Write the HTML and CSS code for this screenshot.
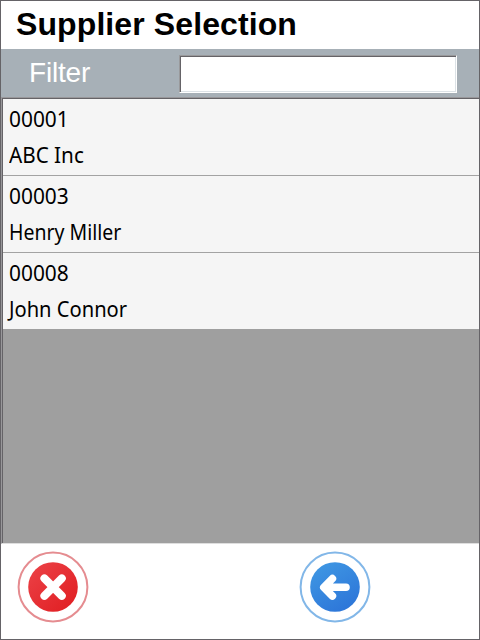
FILE: index.html
```html
<!DOCTYPE html>
<html lang="en">
<head>
<meta charset="utf-8">
<title>Supplier Selection</title>
<link rel="stylesheet" href="styles.css">
</head>
<body>
<main class="screen">
  <h1 class="title">Supplier Selection</h1>
  <div class="filter">
    <label class="filter-label" for="filter">Filter</label>
    <input class="filter-input" id="filter" type="text">
  </div>
  <div class="list">
    <div class="item"><span class="code">00001</span><span class="name abc">ABC Inc</span></div>
    <div class="item"><span class="code">00003</span><span class="name henry">Henry Miller</span></div>
    <div class="item"><span class="code">00008</span><span class="name john">John Connor</span></div>
  </div>
  <footer class="actions">
    <button class="action" type="button" aria-label="Cancel">
      <svg width="72" height="72" viewBox="0 0 72 72">
        <defs><linearGradient id="red" x1="0" y1="0" x2="1" y2="1"><stop offset="0" stop-color="#ec4348"/><stop offset="1" stop-color="#e01c20"/></linearGradient></defs>
        <circle cx="36" cy="36" r="34.4" fill="#fff" stroke="#e58c90" stroke-width="2"/>
        <circle cx="36" cy="36" r="24.8" fill="url(#red)"/>
        <path d="M27.4 27.4 44.8 44.8M44.8 27.4 27.4 44.8" fill="none" stroke="#fff" stroke-width="8" stroke-linecap="round"/>
      </svg>
    </button>
    <button class="action" type="button" aria-label="Back">
      <svg width="72" height="72" viewBox="0 0 72 72">
        <defs><linearGradient id="blue" x1="0.2" y1="0" x2="0.8" y2="1"><stop offset="0" stop-color="#3f97e3"/><stop offset="1" stop-color="#2c74d8"/></linearGradient></defs>
        <circle cx="36" cy="36" r="34.4" fill="#fff" stroke="#82b7e8" stroke-width="2"/>
        <circle cx="36" cy="36" r="24.8" fill="url(#blue)"/>
        <path d="M33.4 27.6 24.8 36.3 33.4 45M25.2 36.3H47" fill="none" stroke="#fff" stroke-width="7.6" stroke-linecap="round" stroke-linejoin="round"/>
      </svg>
    </button>
  </footer>
</main>
</body>
</html>
```
FILE: styles.css
```css
* { box-sizing: border-box; }
body { margin: 0; }
.screen {
  width: 480px;
  height: 640px;
  display: flex;
  flex-direction: column;
  border: 1px solid #656367;
  background: #fff;
  overflow: hidden;
}
.title {
  height: 48px;
  margin: 0;
  padding-left: 15px;
  font: bold 32px/46px "Liberation Sans", Arial, sans-serif;
  letter-spacing: 0.1px;
  color: #000;
  white-space: nowrap;
}
.filter {
  height: 48px;
  display: flex;
  align-items: flex-start;
  background: #a7b0b7;
}
.filter-label {
  width: 178px;
  padding-left: 28px;
  font: 28px/48px "Liberation Sans", Arial, sans-serif;
  letter-spacing: -0.2px;
  color: #fff;
}
.filter-input {
  width: 278px;
  height: 38px;
  margin: 6px 0 0;
  padding: 0 4px;
  border: 1px solid;
  border-color: #99999b #fff #fff #99999b;
  border-radius: 0;
  box-shadow: inset 1px 1px #656367, inset -1px -1px #dce2e6;
  background: #fff;
  font: 22px "Noto Sans", sans-serif;
  outline: 0;
}
.list {
  height: 447px;
  padding: 1px 0 0 1px;
  border: solid;
  border-width: 1px 0 1px 1px;
  border-color: #98979a #98979a #dedede #98979a;
  box-shadow: inset 1px 1px #656367;
  background: #9f9f9f;
}
.item {
  height: 77px;
  padding: 1px 0 0 6px;
  border-bottom: 1px solid #a3a3a3;
  background: #f5f5f5;
  font: 22px/36px "Noto Sans", sans-serif;
  color: #000;
}
.item:last-child {
  height: 76px;
  border-bottom: 0;
}
.code, .name {
  display: block;
  height: 36px;
  white-space: nowrap;
  transform-origin: 0 0;
}
.code { transform: scaleX(0.95); }
.abc { transform: scaleX(0.94); }
.henry { transform: scaleX(0.885); }
.john { transform: scaleX(0.915); }
.actions {
  flex: 1;
  display: flex;
  gap: 210px;
  padding: 7px 0 0 16px;
}
.action {
  width: 72px;
  height: 72px;
  padding: 0;
  border: 0;
  background: none;
}
.action svg { display: block; }
```
